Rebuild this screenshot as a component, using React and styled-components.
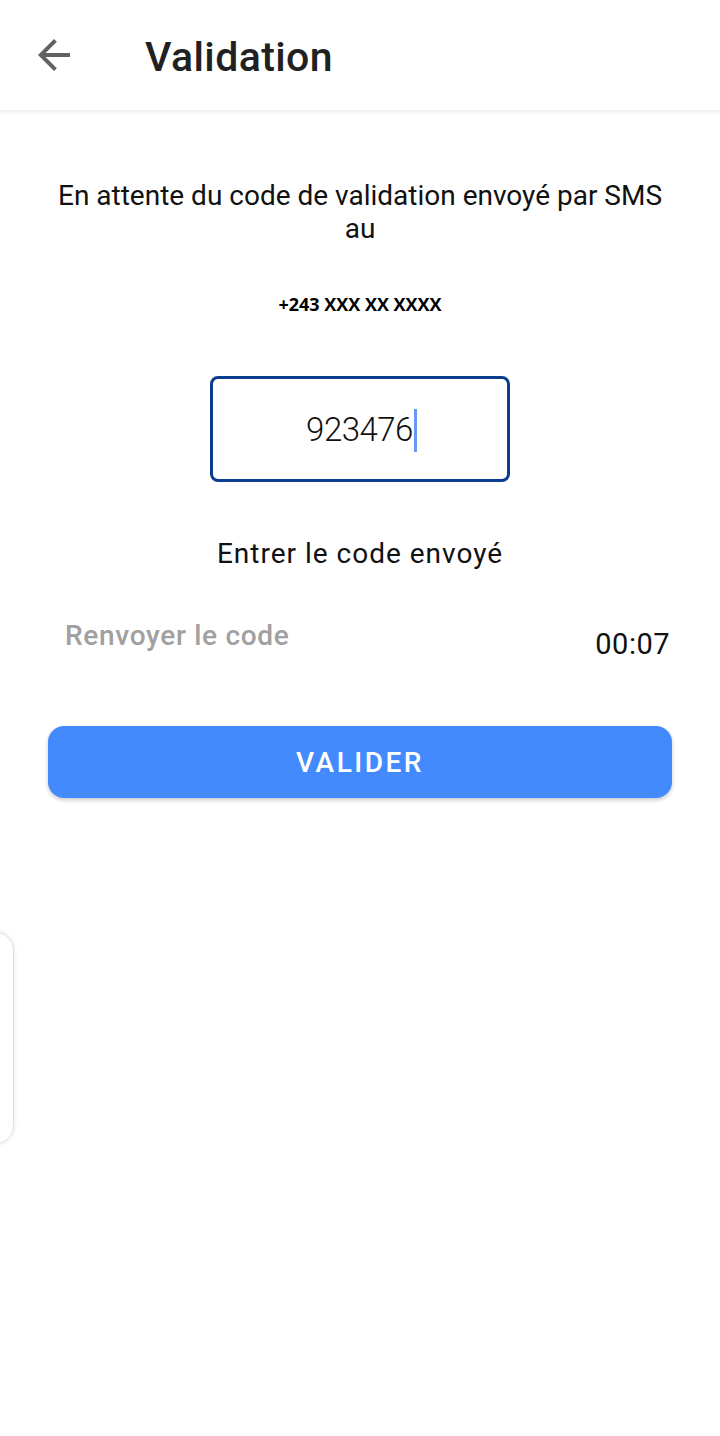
import React from 'react';
import styled, { createGlobalStyle } from 'styled-components';

const GlobalStyle = createGlobalStyle`
    html, body {
        margin: 0;
        padding: 0;
        background: #fff;
        font-family: Roboto, "Noto Sans", sans-serif;
    }
    #root {
        min-height: 1436px;
        position: relative;
        overflow: hidden;
    }
`;

const BackArrow = () => (
    <svg width="48" height="48" viewBox="0 0 24 24" fill="#616161">
        <path d="M20 11H7.83l5.59-5.59L12 4l-8 8 8 8 1.41-1.41L7.83 13H20v-2z" />
    </svg>
);

const App = () => {
    return (
        <Page>
            <GlobalStyle />
            <Header>
                <IconButton aria-label="retour">
                    <BackArrow />
                </IconButton>
                <Title>Validation</Title>
            </Header>

            <Content>
                <Intro>En attente du code de validation envoyé par SMS au</Intro>
                <Phone>+243 XXX XX XXXX</Phone>

                <CodeField>
                    <Digits>923476</Digits>
                    <Caret />
                </CodeField>

                <Hint>Entrer le code envoyé</Hint>

                <ResendRow>
                    <ResendLink>Renvoyer le code</ResendLink>
                    <Timer>00:07</Timer>
                </ResendRow>

                <SubmitButton>VALIDER</SubmitButton>
            </Content>

            <SideTab />
        </Page>
    );
};

export default App;

const Page = styled.div`
    width: 720px;
    min-height: 1436px;
    background: #fff;
`;

const Header = styled.header`
    height: 110px;
    display: flex;
    align-items: center;
    padding-left: 30px;
    gap: 67px;
    background: #fff;
    box-shadow: 0 1px 5px rgba(0, 0, 0, 0.12);
    position: relative;
    z-index: 1;
`;

const IconButton = styled.button`
    width: 48px;
    height: 48px;
    padding: 0;
    border: none;
    background: none;
    display: flex;
    cursor: pointer;
`;

const Title = styled.h1`
    margin: 0;
    padding-top: 3px;
    font-size: 41px;
    font-weight: 500;
    color: #212121;
    letter-spacing: 0.4px;
`;

const Content = styled.main`
    display: flex;
    flex-direction: column;
    align-items: center;
    padding: 69px 48px 0;
`;

const Intro = styled.p`
    margin: 0;
    width: 624px;
    text-align: center;
    font-size: 28px;
    line-height: 33px;
    color: #111;
`;

const Phone = styled.div`
    margin-top: 47px;
    font-family: "Open Sans", sans-serif;
    font-weight: 700;
    font-size: 18px;
    line-height: 24px;
    color: #000;
`;

const CodeField = styled.div`
    margin-top: 60px;
    width: 300px;
    height: 106px;
    box-sizing: border-box;
    border: 3px solid #0b3d91;
    border-radius: 8px;
    display: flex;
    align-items: center;
    justify-content: center;
    padding-left: 3px;
`;

const Digits = styled.span`
    font-weight: 300;
    font-size: 33px;
    letter-spacing: -0.5px;
    color: #111;
`;

const Caret = styled.span`
    width: 3px;
    height: 43px;
    margin-top: 2px;
    margin-left: 1px;
    background: #6a96f5;
`;

const Hint = styled.div`
    margin-top: 56px;
    font-size: 28px;
    line-height: 32px;
    letter-spacing: 1px;
    color: #111;
`;

const ResendRow = styled.div`
    margin-top: 50px;
    align-self: stretch;
    display: flex;
    justify-content: space-between;
    align-items: flex-start;
    padding: 0 2px 0 17px;
`;

const ResendLink = styled.span`
    font-size: 28px;
    font-weight: 500;
    line-height: 32px;
    letter-spacing: 0.7px;
    color: #a0a0a0;
`;

const Timer = styled.span`
    margin-top: 8px;
    font-size: 29px;
    line-height: 32px;
    letter-spacing: 0.5px;
    color: #111;
`;

const SubmitButton = styled.button`
    margin-top: 66px;
    align-self: stretch;
    height: 72px;
    border: none;
    border-radius: 16px;
    background: #448aff;
    color: #fff;
    font-family: Roboto, sans-serif;
    font-size: 28px;
    font-weight: 500;
    letter-spacing: 2.5px;
    box-shadow: 0 2px 4px rgba(0, 0, 0, 0.22);
    cursor: pointer;
`;

const SideTab = styled.div`
    position: absolute;
    left: -22px;
    top: 932px;
    width: 34px;
    height: 210px;
    border-radius: 22px;
    border: 1px solid #e2e2e2;
    background: #fff;
    box-shadow: 0 0 4px rgba(0, 0, 0, 0.1);
`;
